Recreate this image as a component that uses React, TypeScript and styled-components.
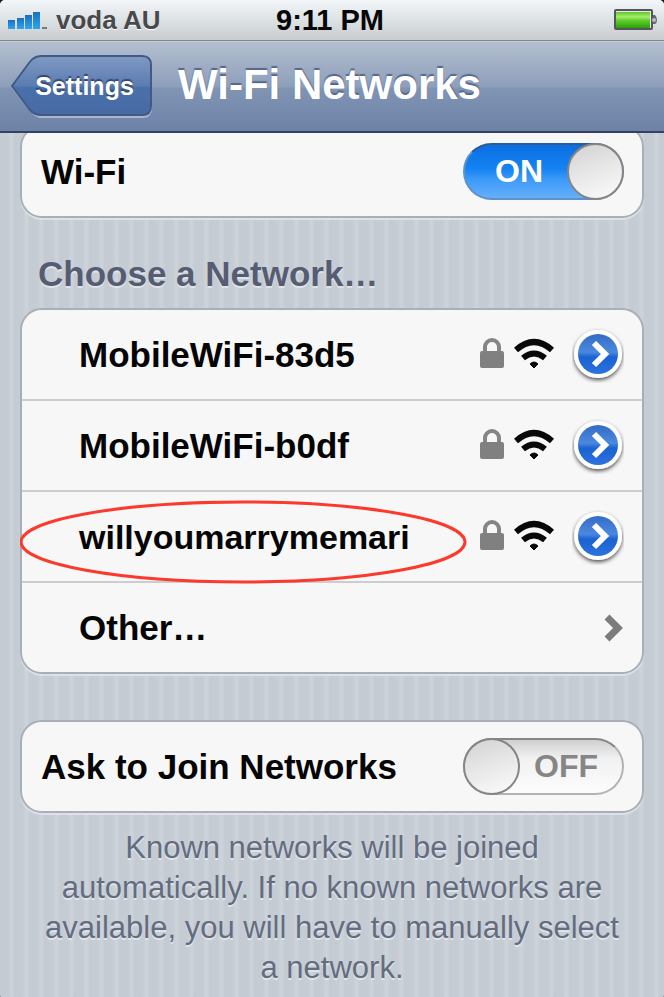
import React, { useState } from "react";
import styled, { createGlobalStyle } from "styled-components";

const GlobalStyle = createGlobalStyle`
  *, *::before, *::after { box-sizing: border-box; }
  body {
    margin: 0;
    font-family: "Liberation Sans", Arial, sans-serif;
    background: #101216;
  }
  button { font: inherit; border: 0; padding: 0; margin: 0; background: none; cursor: pointer; }
`;

const Screen = styled.div`
  min-height: 100vh;
  overflow: hidden;
  border-radius: 5px;
  background: repeating-linear-gradient(
    90deg,
    #c5cbd3 0px,
    #c5ccd4 8px,
    #ccd3d9 11px,
    #ccd3d9 12px,
    #c5cbd3 15px
  );
`;

const StatusBar = styled.div`
  display: grid;
  grid-template-columns: 1fr auto 1fr;
  align-items: center;
  height: 41px;
  padding: 0 6px 0 8px;
  background: linear-gradient(#f2f6f9, #dfe4e7 45%, #c8cccd);
  border-bottom: 1px solid #7e858c;
  color: #070707;
  font-size: 29px;
  font-weight: 700;
`;

const Carrier = styled.div`
  display: flex;
  align-items: center;
  gap: 8px;
  color: #48494b;
  font-size: 26px;
  text-shadow: 0 1px 0 #fff;
`;

const Clock = styled.span`
  padding-right: 6px;
`;

const BatteryIcon = styled.svg`
  justify-self: end;
`;

const NavBar = styled.header`
  position: relative;
  z-index: 1;
  display: flex;
  align-items: center;
  gap: 26px;
  height: 92px;
  padding: 0 11px;
  background: linear-gradient(#b3bfd0, #8e9fba 50%, #8194b3 52%, #6c82a7);
  border-top: 1px solid #c3ccd9;
  border-bottom: 2px solid #344260;
`;

const BackButton = styled.button`
  display: grid;
  align-items: center;
  color: #fff;
  font-size: 25px;
  font-weight: 700;
  text-shadow: 0 -2px 1px #32486d;

  & > * { grid-area: 1 / 1; }
  span { padding: 0 18px 0 24px; z-index: 1; }
  svg { display: block; width: 100%; height: 64px; }
`;

const Title = styled.h1`
  margin: 0;
  padding-bottom: 4px;
  color: #fff;
  font-size: 42px;
  line-height: 48px;
  text-shadow: 0 -2px 1px #55678a;
`;

const Content = styled.main`
  margin-top: -8px;
  padding: 0 20px 12px;
`;

const Card = styled.section`
  position: relative;
  background: #f7f7f7;
  border: 2px solid #a9afb6;
  border-radius: 22px;
  box-shadow: 0 2px 0 #dce2e7;
`;

const Row = styled.div<{ $indented?: boolean }>`
  display: flex;
  align-items: center;
  height: 89px;
  padding: 0 18px 0 ${(p) => (p.$indented ? 57 : 19)}px;
  color: #050505;
  font-size: 35px;
  font-weight: 700;

  & + & { height: 91px; border-top: 2px solid #cccdce; }
`;

const Label = styled.span<{ $size?: number }>`
  flex: 1;
  font-size: ${(p) => p.$size ?? 35}px;
  line-height: 40px;
`;

const RowIcons = styled.div`
  display: flex;
  align-items: center;
  gap: 10px;
`;

const DetailButton = styled.button`
  display: block;
  margin-left: 8px;
  svg { display: block; }
`;

const ChevronButton = styled.button`
  display: block;
  svg { display: block; }
`;

const Toggle = styled.label<{ $on: boolean }>`
  position: relative;
  display: flex;
  flex-direction: ${(p) => (p.$on ? "row" : "row-reverse")};
  align-items: center;
  width: 161px;
  height: 57px;
  border: 2px solid ${(p) => (p.$on ? "#5c93cc" : "#b4b4b4")};
  border-top-color: ${(p) => (p.$on ? "#2a5c9a" : "#868686")};
  border-radius: 29px;
  background: ${(p) =>
    p.$on
      ? "linear-gradient(#0b6fe0, #1583f3 45%, #3d9af8 65%, #65b0fb)"
      : "linear-gradient(#d0d0d0, #f1f1f1 35%, #fdfdfd)"};
  color: ${(p) => (p.$on ? "#fff" : "#868686")};
  font-size: 32px;
  cursor: pointer;
`;

const ToggleInput = styled.input`
  position: absolute;
  inset: 0;
  width: 100%;
  height: 100%;
  margin: 0;
  opacity: 0;
  cursor: pointer;
`;

const ToggleText = styled.span<{ $on: boolean }>`
  flex: 1;
  padding: ${(p) => (p.$on ? "0 0 0 4px" : "0 8px 0 0")};
  text-align: center;
`;

const Knob = styled.span`
  width: 57px;
  height: 57px;
  margin: 0 -2px;
  border: 2px solid #858585;
  border-radius: 50%;
  background: linear-gradient(160deg, #d2d2d2, #e8e8e8 50%, #fbfbfb);
`;

const SectionTitle = styled.h2`
  margin: 36px 18px 14px;
  color: #565d73;
  font-size: 35px;
  line-height: 40px;
  text-shadow: 0 2px 0 #dfe4e9;
`;

const HandDrawnRing = styled.svg`
  position: absolute;
  left: -2px;
  top: 190px;
  pointer-events: none;
`;

const AskCard = styled(Card)`
  margin-top: 46px;
`;

const FootNote = styled.p`
  margin: 15px 16px 0;
  color: #646c80;
  font-size: 31px;
  line-height: 40px;
  text-align: center;
  text-shadow: 0 2px 0 #dfe4e9;
`;

function SignalIcon() {
  return (
    <svg width="40" height="20" viewBox="0 0 40 20" aria-hidden="true">
      <defs>
        <linearGradient id="signal" x1="0" y1="0" x2="0" y2="1">
          <stop offset="0" stopColor="#1b6fc0" />
          <stop offset="1" stopColor="#2fa5ee" />
        </linearGradient>
      </defs>
      <g fill="url(#signal)">
        <rect x="0" y="10" width="7" height="9" />
        <rect x="9" y="8" width="7" height="11" />
        <rect x="17" y="5" width="7" height="14" />
        <rect x="25" y="2" width="7" height="17" />
      </g>
      <rect x="34" y="17" width="5" height="2" fill="#77797b" />
    </svg>
  );
}

function Battery() {
  return (
    <BatteryIcon width="45" height="22" viewBox="0 0 45 22" role="img" aria-label="Battery full">
      <defs>
        <linearGradient id="charge" x1="0" y1="0" x2="0" y2="1">
          <stop offset="0" stopColor="#5fc32d" />
          <stop offset="0.3" stopColor="#a4ee6c" />
          <stop offset="0.55" stopColor="#5ccb27" />
          <stop offset="1" stopColor="#2f9d0c" />
        </linearGradient>
      </defs>
      <rect x="2" y="1" width="37" height="19" rx="1" fill="#e6ebe8" stroke="#55565c" strokeWidth="2" />
      <rect x="3" y="3" width="34" height="16" fill="url(#charge)" />
      <path d="M40 6h2q2 2 2 5t-2 4h-2z" fill="#66676d" />
      <circle cx="41" cy="11" r="2" fill="#b8bcc0" />
    </BatteryIcon>
  );
}

function BackShape() {
  return (
    <svg viewBox="0 0 141 64" preserveAspectRatio="none" aria-hidden="true">
      <defs>
        <linearGradient id="back" x1="0" y1="0" x2="0" y2="1">
          <stop offset="0" stopColor="#8199c2" />
          <stop offset="0.5" stopColor="#5b7db2" />
          <stop offset="0.54" stopColor="#4a70aa" />
          <stop offset="1" stopColor="#476aa5" />
        </linearGradient>
      </defs>
      <path
        d="M2 33 19 10Q25 3 31 3H131Q140 3 140 13V53Q140 62 131 62H31Q25 62 19 55Z"
        fill="none"
        stroke="#a9b8cf"
        strokeWidth="2"
      />
      <path
        d="M1 31 18 8Q23 1 30 1H131Q140 1 140 10V51Q140 60 131 60H30Q23 60 18 54Z"
        fill="url(#back)"
        stroke="#405a86"
        strokeWidth="2"
      />
    </svg>
  );
}

function LockIcon() {
  return (
    <svg width="24" height="34" viewBox="0 0 24 34" role="img" aria-label="Secured">
      <path d="M5 15V9a7 7 0 0 1 14 0v6" fill="none" stroke="#858585" strokeWidth="4" />
      <rect x="0" y="13" width="24" height="17" rx="2" fill="#808080" />
    </svg>
  );
}

function WifiIcon() {
  return (
    <svg width="40" height="34" viewBox="0 0 40 34" role="img" aria-label="Strong signal">
      <g fill="none" stroke="#080808" strokeWidth="6">
        <path d="M2 12Q20-4 38 12" />
        <path d="M9 20Q20 11 31 20" />
      </g>
      <path d="M16 26q4-4 8 0l-4 4z" fill="#080808" stroke="#080808" strokeWidth="1" />
    </svg>
  );
}

function DetailIcon() {
  return (
    <svg width="52" height="56" viewBox="0 0 52 56" aria-hidden="true">
      <defs>
        <linearGradient id="detail" x1="0" y1="0" x2="0" y2="1">
          <stop offset="0" stopColor="#356cc5" />
          <stop offset="0.45" stopColor="#4c88df" />
          <stop offset="0.58" stopColor="#1b62d2" />
          <stop offset="1" stopColor="#2c73df" />
        </linearGradient>
        <filter id="drop" x="-20%" y="-20%" width="140%" height="150%">
          <feDropShadow dx="0" dy="2" stdDeviation="2" floodColor="#000" floodOpacity="0.7" />
        </filter>
      </defs>
      <circle cx="26" cy="27" r="24" fill="#fff" filter="url(#drop)" />
      <circle cx="26" cy="27" r="20" fill="url(#detail)" />
      <path d="M22 16 33 27 22 38" fill="none" stroke="#fff" strokeWidth="6" />
    </svg>
  );
}

function ToggleSwitch({ id, initial }: { id: string; initial: boolean }) {
  const [on, setOn] = useState(initial);
  return (
    <Toggle $on={on}>
      <ToggleText $on={on}>{on ? "ON" : "OFF"}</ToggleText>
      <Knob />
      <ToggleInput
        type="checkbox"
        role="switch"
        aria-labelledby={id}
        checked={on}
        onChange={(e) => setOn(e.target.checked)}
      />
    </Toggle>
  );
}

const networks = [
  { name: "MobileWiFi-83d5", size: 35 },
  { name: "MobileWiFi-b0df", size: 35 },
  { name: "willyoumarrymemari", size: 34 },
];

export default function App() {
  return (
    <Screen>
      <GlobalStyle />
      <StatusBar>
        <Carrier>
          <SignalIcon />
          <span>voda AU</span>
        </Carrier>
        <Clock>9:11 PM</Clock>
        <Battery />
      </StatusBar>
      <NavBar>
        <BackButton type="button">
          <BackShape />
          <span>Settings</span>
        </BackButton>
        <Title>Wi-Fi Networks</Title>
      </NavBar>
      <Content>
        <Card>
          <Row>
            <Label id="wifi">Wi-Fi</Label>
            <ToggleSwitch id="wifi" initial={true} />
          </Row>
        </Card>
        <SectionTitle>Choose a Network…</SectionTitle>
        <Card>
          {networks.map((n) => (
            <Row key={n.name} $indented>
              <Label $size={n.size}>{n.name}</Label>
              <RowIcons>
                <LockIcon />
                <WifiIcon />
                <DetailButton type="button" aria-label={`Details for ${n.name}`}>
                  <DetailIcon />
                </DetailButton>
              </RowIcons>
            </Row>
          ))}
          <Row $indented>
            <Label>Other…</Label>
            <ChevronButton type="button" aria-label="Other network">
              <svg width="22" height="28" viewBox="0 0 22 28" aria-hidden="true">
                <path d="M5 3 16 14 5 25" fill="none" stroke="#7c7c7c" strokeWidth="7" />
              </svg>
            </ChevronButton>
          </Row>
          <HandDrawnRing width="448" height="84" viewBox="0 0 448 84" aria-hidden="true">
            <ellipse cx="223" cy="42" rx="222" ry="40" fill="none" stroke="#fb392c" strokeWidth="3" />
          </HandDrawnRing>
        </Card>
        <AskCard>
          <Row>
            <Label id="ask">Ask to Join Networks</Label>
            <ToggleSwitch id="ask" initial={false} />
          </Row>
        </AskCard>
        <FootNote>
          Known networks will be joined automatically. If no known networks are available, you will
          have to manually select a network.
        </FootNote>
      </Content>
    </Screen>
  );
}
